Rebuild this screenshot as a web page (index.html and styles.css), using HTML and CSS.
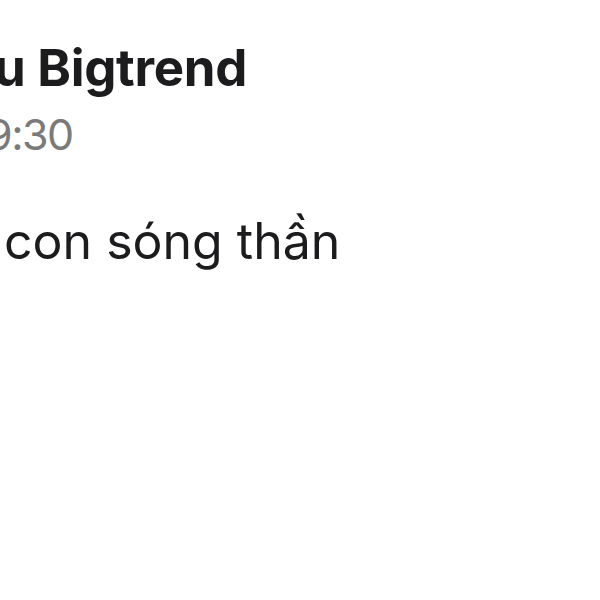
FILE: index.html
```html
<!DOCTYPE html>
<html>
	<head>
		<meta charset="utf-8">
		<title></title>
		<link rel="stylesheet" href="styles.css">
	</head>
	<body>
		<div id="post">
			<div class="head">
				<div class="name">u Bigtrend</div>
				<div class="time">9:30</div>
			</div>
			<div class="text">con sóng thần</div>
		</div>
	</body>
</html>
```

FILE: styles.css
```css
*{margin: 0;padding: 0;}
html,
body{width: 100%;height: 100%;overflow: hidden;background-color: #fff;}
body{font-family: Inter, "Noto Sans", sans-serif;color: #1c1c1e;}
#post{padding-top: 36px;}
.name{font-size: 51px;font-weight: 700;line-height: 64px;margin-left: -6px;letter-spacing: -0.3px;}
.time{font-size: 43px;line-height: 56px;color: #7a7a7a;margin-left: -14px;margin-top: 6px;letter-spacing: -1.5px;}
.text{font-size: 50px;line-height: 64px;margin-top: 47px;margin-left: 4px;}
```
